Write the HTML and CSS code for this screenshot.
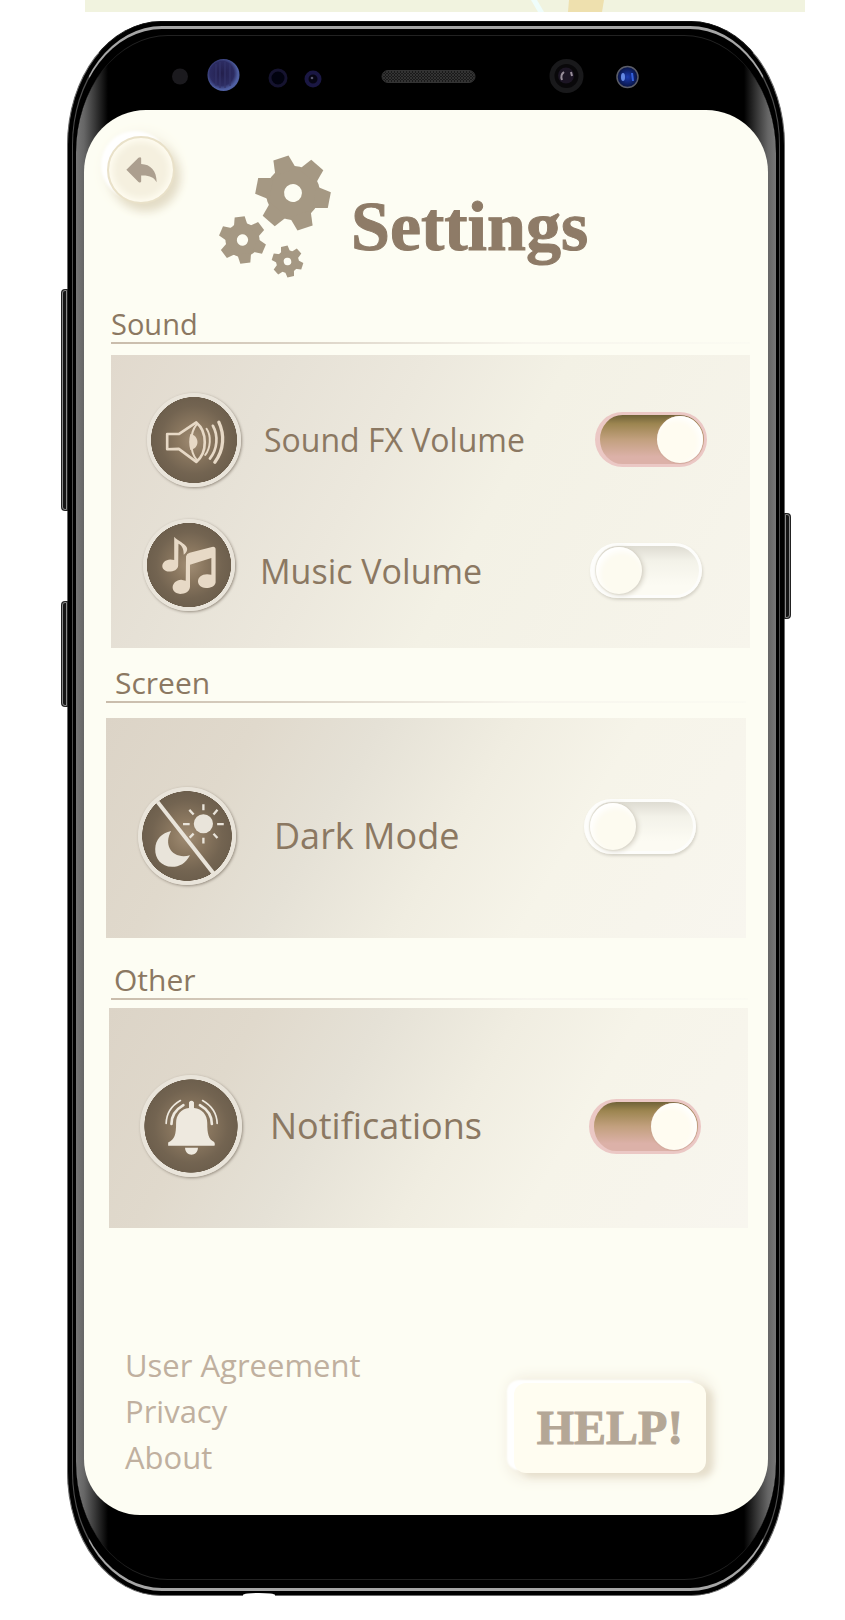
FILE: index.html
```html
<!DOCTYPE html>
<html lang="en">
<head>
<meta charset="utf-8">
<meta name="viewport" content="width=device-width, initial-scale=1">
<title>Settings</title>
<link rel="stylesheet" href="styles.css">
</head>
<body>
<svg class="map-strip" viewBox="0 0 720 12" preserveAspectRatio="none" aria-hidden="true">
  <path d="M446 0h6l7 12h-6z" fill="#effdfb"/>
  <path d="M484 0h35l-2 12h-34z" fill="#eee0ae"/>
</svg>

<div class="phone">
  <span class="side-key key-volume"></span>
  <span class="side-key key-assist"></span>
  <span class="side-key key-power"></span>
  <span class="jack"></span>
  <div class="face">
    <svg class="sensors" viewBox="84 36 684 74" aria-hidden="true">
      <defs>
        <radialGradient id="lens" cx="45%" cy="45%"><stop offset="0" stop-color="#231f4c"/><stop offset=".75" stop-color="#2c2c62"/><stop offset="1" stop-color="#4f5fa2"/></radialGradient>
        <radialGradient id="blue" cx="50%" cy="50%"><stop offset="0" stop-color="#1c3bb0"/><stop offset="1" stop-color="#071240"/></radialGradient>
        <pattern id="mesh" width="3" height="3" patternUnits="userSpaceOnUse"><path d="M0 0h3v3H0z" fill="#1a1a1a"/><path d="M0 0l3 3M3 0L0 3" stroke="#3c3c3c" stroke-width=".7"/></pattern>
      </defs>
      <circle cx="180" cy="76.500" r="8" fill="#1b1a1e"/>
      <circle cx="223.500" cy="75" r="16" fill="url(#lens)"/>
      <path d="M216 64v22M220 62v26M225 62v26M230 64v22" stroke="#34356a" stroke-width="1.200"/>
      <circle cx="278" cy="78" r="8" fill="#01020f" stroke="#15132f" stroke-width="3"/>
      <circle cx="313" cy="79" r="6.500" fill="#060512" stroke="#1a1743" stroke-width="4"/>
      <circle cx="312" cy="78" r="1.300" fill="#55546b"/>
      <rect x="382" y="70.500" width="93" height="12" rx="6" fill="url(#mesh)" stroke="#333"/>
      <circle cx="566.500" cy="76" r="14.500" fill="#09080a" stroke="#19191b" stroke-width="5"/>
      <circle cx="566" cy="75.500" r="8" fill="#1c1524"/>
      <path d="M562 80q-2-5 2-8M571 72l1 4" stroke="#9a909c" stroke-width="2" fill="none"/>
      <circle cx="627.500" cy="77" r="10.500" fill="url(#blue)" stroke="#5b5d68" stroke-width="1.500"/>
      <ellipse cx="623" cy="77" rx="2" ry="4" fill="#6488e2"/>
      <path d="M632 73l1 8" stroke="#3561dc" stroke-width="2"/>
    </svg>

    <main class="screen">
      <header class="header">
        <button class="back" type="button" aria-label="Back">
          <svg viewBox="0 0 92 76" aria-hidden="true"><path d="M1 38 37 2q7-4 8 2v17c28 1 46 20 46 54-8-15-21-21-46-20v18q-2 5-8 1z" fill="#ac9f8f"/></svg>
        </button>
        <div class="brand">
          <svg class="gears" viewBox="219 155 112 124" aria-hidden="true">
            <defs>
              <path id="tooth" d="M-8-37H8L11-22H-11z"/>
              <g id="gear">
                <circle r="27"/>
                <use href="#tooth"/><use href="#tooth" transform="rotate(60)"/><use href="#tooth" transform="rotate(120)"/>
                <use href="#tooth" transform="rotate(180)"/><use href="#tooth" transform="rotate(240)"/><use href="#tooth" transform="rotate(300)"/>
                <circle class="hole" r="9"/>
              </g>
            </defs>
            <use href="#gear" transform="translate(293 193) rotate(-19)"/>
            <use href="#gear" transform="translate(242.500 240) rotate(-7) scale(.63)"/>
            <use href="#gear" transform="translate(287.500 261.500) rotate(-12) scale(.42)"/>
          </svg>
          <h1 class="title">Settings</h1>
        </div>
      </header>

      <section class="section sound">
        <h2 class="heading">Sound</h2>
        <div class="panel">
          <label class="row row-fx">
            <span class="icon">
              <svg viewBox="170 303 284 284" aria-hidden="true">
                <g fill="none" stroke="#e7d9c6" stroke-width="8" stroke-linejoin="round" stroke-linecap="round">
                  <path d="M231 427h35l53-35c34 28 34 92 0 119l-53-39-35 1z"/>
                  <path d="M320 398c-22 27-22 80 0 107" stroke-width="6"/>
                  <path d="M350 411c15 22 12 58-4 79" stroke-width="6"/>
                  <path d="M369 402c17 30 14 71-9 99" stroke-width="8"/>
                  <path d="M387 391c17 36 17 83-12 121" stroke-width="10"/>
                </g>
                <path d="M301 427c27 4 30 43 0 48q-7-24 0-48" fill="#e7d9c6"/>
              </svg>
            </span>
            <span class="name">Sound FX Volume</span>
            <input class="toggle" type="checkbox" role="switch" checked>
          </label>
          <label class="row row-music">
            <span class="icon">
              <svg viewBox="160 681 280 280" aria-hidden="true">
                <g fill="#e7d9c6">
                  <path d="M255 735c9 12 34 20 39 34 2 8-2 14-10 21 0-16-4-28-16-34l-1 67c-1 12-14 18-27 18-30-2-27-35 3-37l12 2z"/>
                  <path d="M291 794q2-7 11-10l68-18q11-2 11 8v100c-2 12-15 17-29 17-35-3-31-42 3-42l13 2v-51l-65 20v68c-1 14-15 21-30 21-34-4-27-41 3-43l14 3z"/>
                </g>
              </svg>
            </span>
            <span class="name">Music Volume</span>
            <input class="toggle" type="checkbox" role="switch">
          </label>
        </div>
      </section>

      <section class="section display">
        <h2 class="heading">Screen</h2>
        <div class="panel">
          <label class="row row-dark">
            <span class="icon">
              <svg viewBox="143 377 296 296" aria-hidden="true">
                <path d="M202 422 370 637" stroke="#e9e4da" stroke-width="12"/>
                <path d="M243 510c-26 47 8 87 57 73-13 25-32 35-54 35-33-1-52-25-51-54 1-29 20-48 48-54z" fill="#e9e4da"/>
                <circle cx="340.500" cy="488" r="29" fill="#e9e4da"/>
                <path d="M340.500 429v18M340.500 530v18M279 489h20M382 489h20M298 446l13 14M383 446l-12 14M371 518l12 13M311 518l-12 12" stroke="#e9e4da" stroke-width="7"/>
              </svg>
            </span>
            <span class="name">Dark Mode</span>
            <input class="toggle" type="checkbox" role="switch">
          </label>
        </div>
      </section>

      <section class="section other">
        <h2 class="heading">Other</h2>
        <div class="panel">
          <label class="row row-bell">
            <span class="icon">
              <svg viewBox="149 341 308 308" aria-hidden="true">
                <path d="M297 441v-18q7-8 15 0v18c25 2 40 22 40 44 0 34 4 50 21 58q4 7 1 12H234v-10c20-10 24-24 24-60 0-22 15-42 39-44zM285 561h39c-1 28-38 28-39 0z" fill="#eee9df"/>
                <g fill="none" stroke="#eee9df" stroke-linecap="round">
                  <path d="M280 432c-21 12-36 33-36 57M330 432c21 12 36 33 36 57" stroke-width="8"/>
                  <path d="M271 418c-26 15-42 39-43 69M338 418c26 15 43 39 44 69" stroke-width="5"/>
                </g>
              </svg>
            </span>
            <span class="name">Notifications</span>
            <input class="toggle" type="checkbox" role="switch" checked>
          </label>
        </div>
      </section>

      <footer class="footer">
        <nav class="links">
          <a href="#agreement">User Agreement</a>
          <a href="#privacy">Privacy</a>
          <a href="#about">About</a>
        </nav>
        <button class="help" type="button">HELP!</button>
      </footer>
    </main>
  </div>
</div>
</body>
</html>
```

FILE: styles.css
```css
* { box-sizing: border-box; }

body {
  margin: 0;
  background: #fff;
  color: #8b7862;
  font-family: "Open Sans", "Noto Sans", sans-serif;
}

.map-strip {
  display: block;
  width: calc(100% - 125px);
  height: 12px;
  margin: 0 40px 9px 85px;
  background: #f1f3df;
}

/* Device body */
.phone {
  position: relative;
  margin: 0 60px 26px 67px;
  padding: 4px;
  border: 1px solid #6b6b6b;
  border-top-color: #111;
  border-radius: 94px / 124px;
  background: #000;
}

.face {
  position: relative;
  padding: 7px 11px 73px;
  border: 1px solid #4e4e4e;
  border-top: 3px solid #a6a6a6;
  border-bottom: 3px solid #a6a6a6;
  border-radius: 90px / 119px;
  background: #000;
}

/* Curved glass edge, lit along both sides */
.face::before {
  content: "";
  position: absolute;
  inset: 6px 3px 8px;
  border: 1px solid #222;
  border-width: 1px 0;
  border-radius: 92px / 118px;
  background: linear-gradient(90deg, #777 0, #666 8px, #3c3c3c 18px, #000 32px, #000 calc(100% - 32px), #3c3c3c calc(100% - 18px), #666 calc(100% - 8px), #777 100%);
}

.sensors {
  position: relative;
  display: block;
  width: 100%;
}

.side-key {
  position: absolute;
  width: 7px;
  border: 2px solid #222;
  outline: 1px solid #888;
  outline-offset: -2px;
  background: #151515;
}

.key-volume { left: -7px; top: 267px; height: 222px; border-radius: 4px 0 0 4px; }
.key-assist { left: -7px; top: 579px; height: 106px; border-radius: 4px 0 0 4px; }
.key-power { right: -7px; top: 491px; height: 106px; border-radius: 0 4px 4px 0; }

.jack {
  position: absolute;
  left: 175px;
  bottom: -2px;
  width: 32px;
  height: 4px;
  border-radius: 50% 50% 0 0;
  background: #fff;
}

.screen {
  position: relative;
  padding-bottom: 35px;
  border-radius: 62px 62px 56px 56px;
  background: #fdfdf3;
}

/* Header */
.header {
  display: flex;
  align-items: flex-start;
  gap: 44px;
  padding: 26px 23px 27px;
}

.back {
  display: grid;
  place-items: center;
  flex: none;
  width: 68px;
  height: 68px;
  padding: 0;
  border: 2px solid #e9e1c9;
  border-radius: 50%;
  background: #f5f0df;
  box-shadow: inset 0 0 7px 3px #fffdf2, -6px -5px 3px #fff, 5px 7px 10px #e3dcc6, 0 0 16px #f2eddc;
}

.back svg { width: 31px; }

.brand {
  display: flex;
  align-items: flex-end;
  gap: 20px;
  padding-top: 19px;
}

.gears {
  width: 112px;
  height: 124px;
  fill: #a59883;
}

.hole { fill: #fdfdf3; }

.title {
  margin: 0 0 12px;
  font: bold 70px/80px "Liberation Serif", serif;
  -webkit-text-stroke: 1px #8e7b67;
  color: #8e7b67;
}

/* Sections */
.heading {
  margin: 0;
  border-bottom: 2px solid;
  border-image: linear-gradient(90deg, #c9bcab, #d8cfc1 25%, #f7f5ed 65%, #fbfbf2) 1;
  font-size: 30px;
  font-weight: 400;
  line-height: 36px;
}

.panel {
  display: flex;
  flex-direction: column;
  justify-content: center;
  background: linear-gradient(120deg, #dcd4c7 0, #e0d9cc 20%, #e5e1d6 36%, #f0ede1 54%, #f6f4e9 70%, #f8f6ef 100%);
}

.sound { margin: 0 18px 17px 27px; }
.sound .heading { margin-bottom: 11px; font-size: 29px; }
.sound .panel {
  gap: 32px;
  min-height: 293px;
  padding-top: 12px;
  background: linear-gradient(118deg, #e1d9cd 0, #e6e1d6 22%, #ece8dd 40%, #f3f1e5 58%, #f7f5ec 100%);
}

.display { margin: 0 22px 24px; }
.display .heading { margin-bottom: 15px; padding-left: 9px; }

.other { margin: 0 20px 0 25px; }
.other .heading { margin: 0 0 8px 2px; padding-left: 3px; }

.display .panel,
.other .panel { min-height: 220px; }

.row {
  display: flex;
  align-items: center;
}

.name {
  flex: 1;
  font-size: 36px;
  line-height: 48px;
  white-space: nowrap;
}

.icon {
  flex: none;
  border-radius: 50%;
  background: radial-gradient(circle closest-side, #a18d74 0, #8a775f 35%, #736451 72%, #6d5f4d 91%, #e9e4da 92%);
  box-shadow: 1px 1px 3px #968d80;
}

.icon svg { display: block; width: 100%; }

.row-fx { padding: 0 43px 0 36px; gap: 23px; }
.row-fx .icon { width: 94px; }
.row-fx .name { font-size: 32px; }

.row-music { min-height: 104px; padding: 0 48px 0 32px; gap: 25px; }
.row-music .icon { align-self: flex-start; width: 92px; }
.row-music .name { font-size: 34px; }

.row-dark { padding: 16px 50px 0 32px; gap: 38px; }
.row-dark .icon { width: 98px; }
.row-dark .toggle { margin-bottom: 20px; }

.row-bell { padding: 16px 47px 0 31px; gap: 28px; }
.row-bell .icon { width: 102px; }

/* Switches */
.toggle {
  appearance: none;
  flex: none;
  display: flex;
  align-items: center;
  width: 112px;
  height: 55px;
  margin: 0;
  padding: 0 1px;
  border: 3px solid #fdfdfb;
  border-width: 3px 3px 3px 5px;
  border-radius: 28px;
  background: linear-gradient(#dedcd2, #f3f2e9 30%, #fcfbf3 80%);
  box-shadow: 1px 2px 3px #d6d3c8;
}

.toggle::before {
  content: "";
  width: 46px;
  height: 47px;
  border-radius: 50%;
  background: #fdfbf0;
  box-shadow: inset 3px 4px 6px #fff, 2px 1px 5px #d5d1c5, 0 0 2px #c9c5b8;
}

.toggle:checked {
  justify-content: flex-end;
  border-color: #ebc8c5;
  background: linear-gradient(#6f6238, #9c8550 18%, #c2a07e 50%, #dcb1a8 85%);
  box-shadow: none;
}

.toggle:checked::before {
  background: #fffcf1;
  box-shadow: inset -3px 3px 6px #fff, 0 0 2px #c09a84;
}

/* Footer */
.footer {
  display: flex;
  align-items: flex-end;
  justify-content: space-between;
  margin-top: 114px;
  padding: 0 62px 0 41px;
}

.links {
  display: flex;
  flex-direction: column;
}

.links a {
  color: #c0b09f;
  font-size: 31px;
  line-height: 46px;
  text-decoration: none;
}

.help {
  width: 192px;
  height: 90px;
  margin-bottom: 7px;
  padding: 0;
  border: 0;
  border-radius: 12px;
  background: #fffdf1;
  box-shadow: -7px -3px 2px #fff, 7px 4px 6px #e6dfcd, 0 0 14px 6px #f1ecde;
  color: #b4a796;
  font: bold 48px/60px "Liberation Serif", serif;
  -webkit-text-stroke: 1px #b4a796;
}
```
